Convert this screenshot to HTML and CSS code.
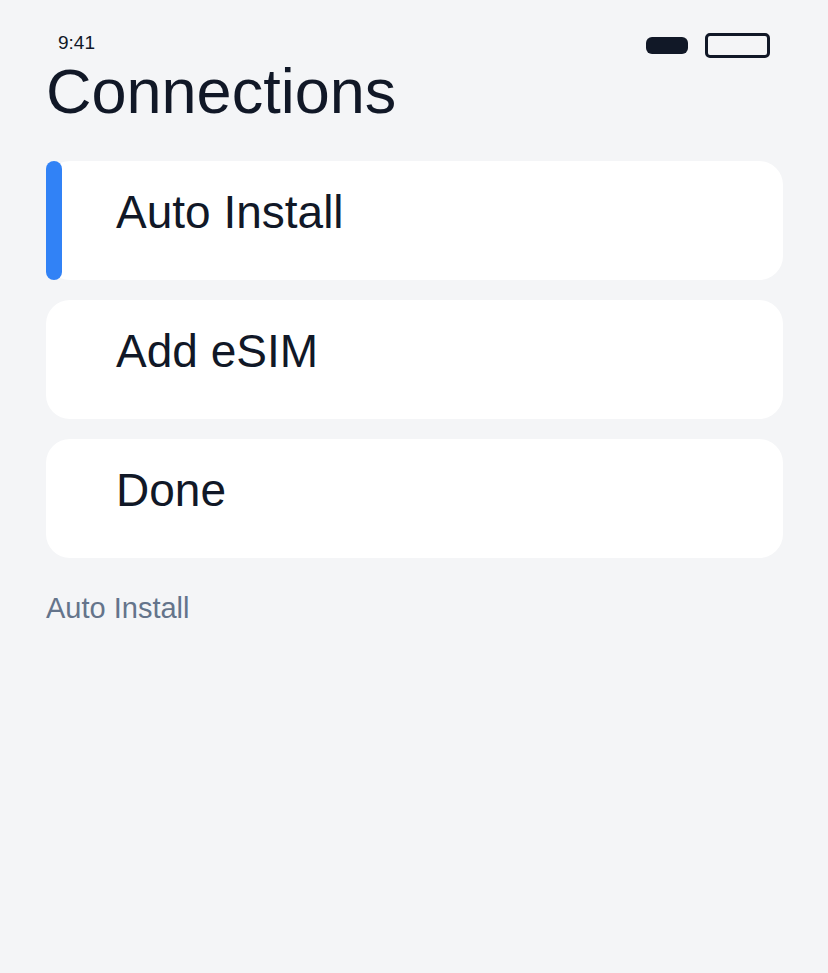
FILE: index.html
```html
<!DOCTYPE html>
<html lang="en">
<head>
  <meta charset="UTF-8">
  <meta name="viewport" content="width=device-width, initial-scale=1.0">
  <title>Connections</title>
  <link rel="stylesheet" href="styles.css">
</head>
<body>
  <div class="screen">
    <div class="status-bar">
      <span class="time">9:41</span>
      <div class="status-icons">
        <span class="signal"></span>
        <span class="battery"></span>
      </div>
    </div>

    <h1 class="title">Connections</h1>

    <div class="menu">
      <div class="menu-item selected">Auto Install</div>
      <div class="menu-item">Add eSIM</div>
      <div class="menu-item">Done</div>
    </div>

    <p class="caption">Auto Install</p>
  </div>
</body>
</html>
```

FILE: styles.css
```css
body {
  margin: 0;
  background: #f4f5f7;
  font-family: 'Liberation Sans', Arial, sans-serif;
  color: #111827;
}
.screen {
  padding: 28px 45px 0 46px;
}
.status-bar {
  display: flex;
  justify-content: space-between;
  align-items: center;
  padding: 0 13px 0 12px;
  height: 30px;
}
.time {
  font-size: 19px;
}
.status-icons {
  display: flex;
  align-items: center;
  gap: 17px;
  margin-top: 4px;
}
.signal {
  width: 42px;
  height: 17px;
  background: #111827;
  border-radius: 6px;
}
.battery {
  width: 59px;
  height: 19px;
  border: 3px solid #111827;
  border-radius: 5px;
}
.title {
  font-size: 63px;
  font-weight: normal;
  margin: 2px 0 38px;
  line-height: 1;
}
.menu {
  display: flex;
  flex-direction: column;
  gap: 20px;
}
.menu-item {
  position: relative;
  background: #fff;
  border-radius: 24px;
  height: 119px;
  box-sizing: border-box;
  padding: 24px 0 0 70px;
  font-size: 46px;
}
.menu-item.selected::before {
  content: '';
  position: absolute;
  left: 0;
  top: 0;
  bottom: 0;
  width: 16px;
  background: #3182f6;
  border-radius: 8px;
}
.caption {
  margin: 34px 0 0;
  font-size: 29px;
  color: #64748b;
}
```
